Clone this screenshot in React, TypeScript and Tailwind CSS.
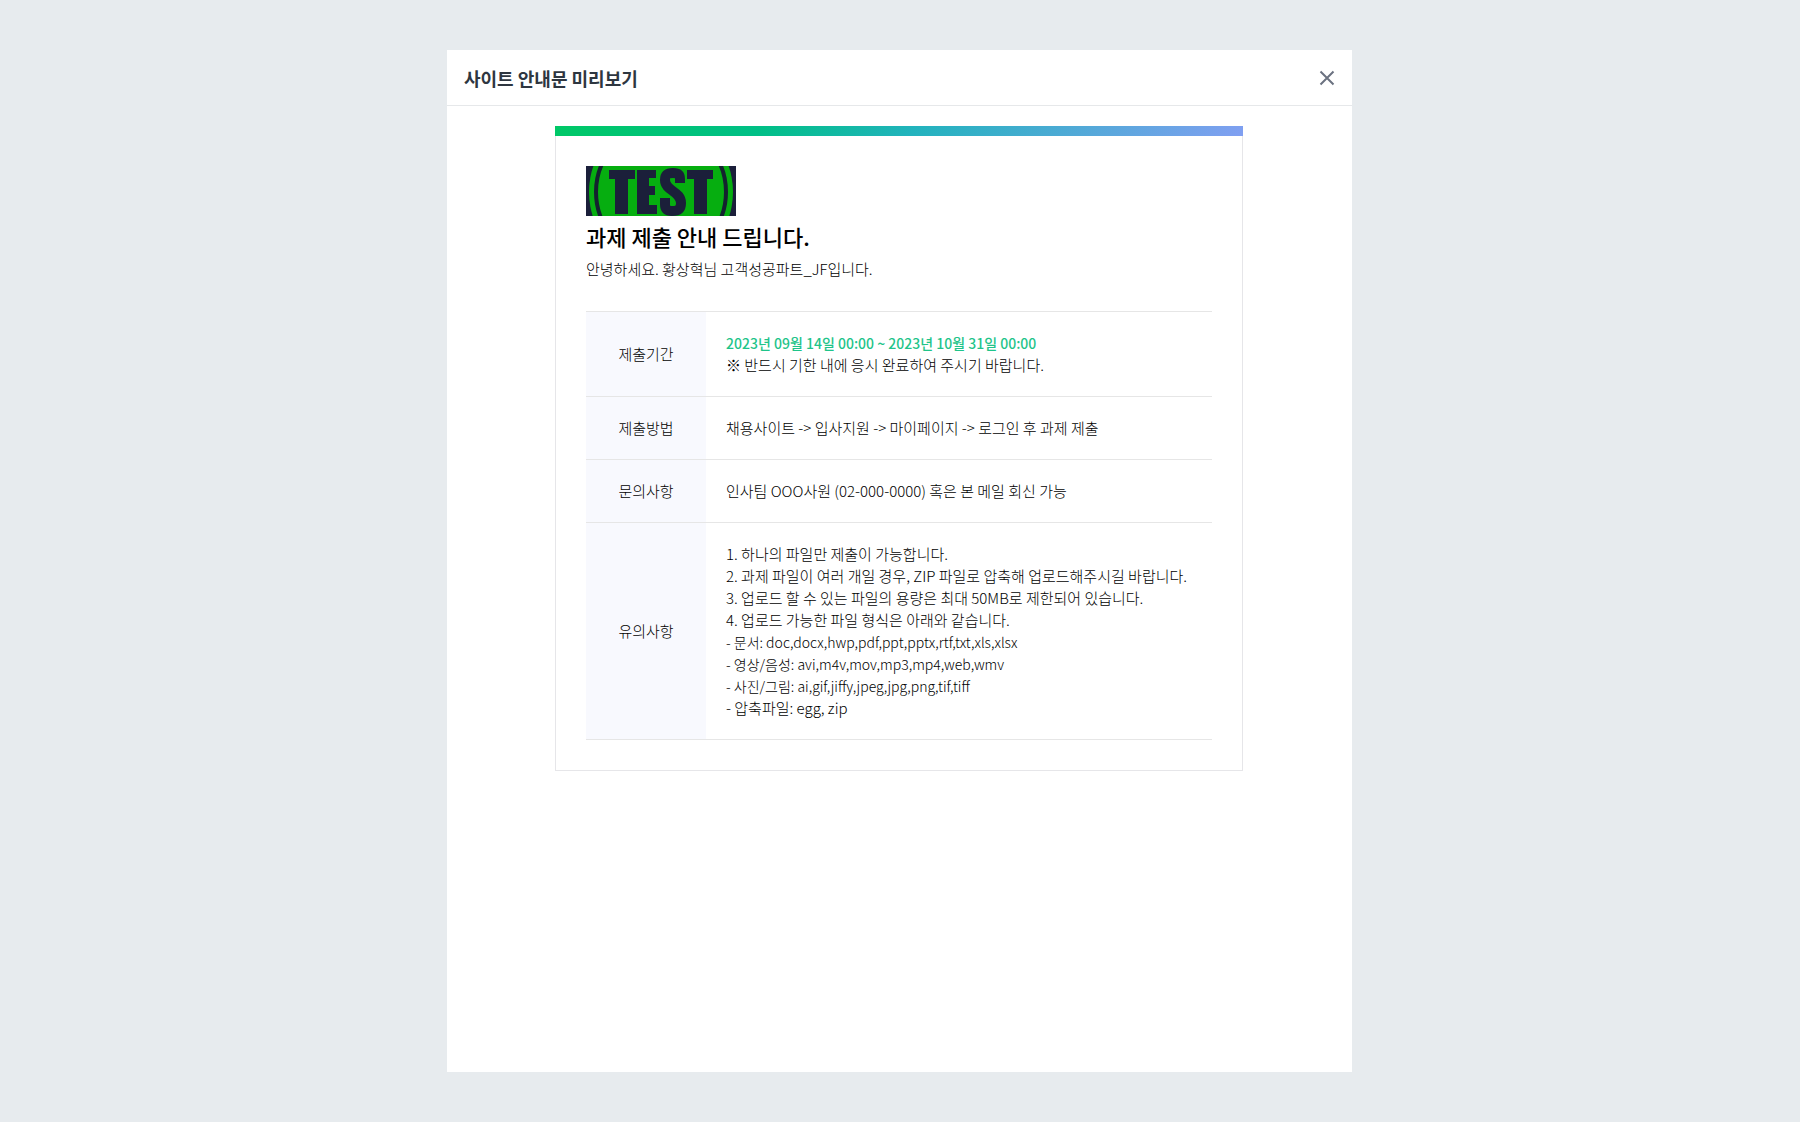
import { ReactNode } from "react";

interface GuideRow {
  label: string;
  content: ReactNode;
}

const rows: GuideRow[] = [
  {
    label: "제출기간",
    content: (
      <>
        <p className="text-sm leading-[22px] font-medium text-[#1fc48a]">
          2023년 09월 14일 00:00 ~ 2023년 10월 31일 00:00
        </p>
        <p>※ 반드시 기한 내에 응시 완료하여 주시기 바랍니다.</p>
      </>
    ),
  },
  {
    label: "제출방법",
    content: <p>채용사이트 -&gt; 입사지원 -&gt; 마이페이지 -&gt; 로그인 후 과제 제출</p>,
  },
  {
    label: "문의사항",
    content: <p>인사팀 OOO사원 (02-000-0000) 혹은 본 메일 회신 가능</p>,
  },
  {
    label: "유의사항",
    content: (
      <>
        <p>1. 하나의 파일만 제출이 가능합니다.</p>
        <p>2. 과제 파일이 여러 개일 경우, ZIP 파일로 압축해 업로드해주시길 바랍니다.</p>
        <p>3. 업로드 할 수 있는 파일의 용량은 최대 50MB로 제한되어 있습니다.</p>
        <p>4. 업로드 가능한 파일 형식은 아래와 같습니다.</p>
        <div className="text-sm leading-[22px]">
          <p>- 문서: doc,docx,hwp,pdf,ppt,pptx,rtf,txt,xls,xlsx</p>
          <p>- 영상/음성: avi,m4v,mov,mp3,mp4,web,wmv</p>
          <p>- 사진/그림: ai,gif,jiffy,jpeg,jpg,png,tif,tiff</p>
        </div>
        <p>- 압축파일: egg, zip</p>
      </>
    ),
  },
];

function Logo() {
  return (
    <svg width="150" height="50" viewBox="0 0 150 50" role="img" aria-label="TEST">
      <rect width="150" height="50" fill="#1b1f3a" />
      <ellipse cx="75" cy="26" rx="72" ry="76" fill="#06ae10" />
      <ellipse cx="75" cy="26" rx="65" ry="66" fill="none" stroke="#14222f" strokeWidth="4" />
      {/* block letters */}
      <g fill="#1b1f3a">
        <path d="M23 4H49V13H42V48H29V13H23Z" />
        <path d="M51 4H70V12H63V20H69V29H63V39H71V48H51Z" />
        <path d="M101 4H127V13H121V48H108V13H101Z" />
      </g>
      <path
        d="M94 17V13C94 8 92 7 87 7C81 7 79 9 79 14C79 25 95 25 95 37C95 43 92 45 86 45C81 45 79 43 79 38V32"
        fill="none"
        stroke="#1b1f3a"
        strokeWidth="10"
      />
    </svg>
  );
}

export default function App() {
  return (
    <div className="flex min-h-screen justify-center bg-[#e7ebee] py-[50px] pr-px font-['Noto_Sans_CJK_KR',sans-serif] text-black">
      <div role="dialog" aria-labelledby="dialog-title" className="w-full max-w-[905px] bg-white">
        {/* Header */}
        <header className="flex h-14 items-center justify-between border-b border-[#e6e8ea] px-[17px]">
          <h1 id="dialog-title" className="text-lg font-bold text-[#2e3640]">
            사이트 안내문 미리보기
          </h1>
          <button type="button" aria-label="닫기" className="flex size-4 items-center justify-center text-[#6b7280]">
            <svg viewBox="0 0 16 16" className="size-4" fill="none" stroke="currentColor" strokeWidth="2">
              <path d="M1.5 1.5 14.5 14.5M14.5 1.5 1.5 14.5" />
            </svg>
          </button>
        </header>

        {/* Mail preview */}
        <main className="px-27 pt-5">
          <div className="max-w-[688px]">
            <div className="h-2.5 bg-[linear-gradient(135deg,#00c866_0%,#00bf86_30%,#22b3bd_52%,#819ff2_100%)]" />
            <div className="border border-t-0 border-[#e6e6e9] px-[30px] py-[30px] text-[15px] leading-[22px] font-light">
              <Logo />
              <h2 className="mt-1 text-[22px] leading-8 font-medium">과제 제출 안내 드립니다.</h2>
              <p className="mt-1.5">안녕하세요. 황상혁님 고객성공파트_JF입니다.</p>

              <table className="mt-[31px] w-full border-collapse">
                <tbody>
                  {rows.map((row) => (
                    <tr key={row.label} className="border-y border-[#e6e6e6]">
                      <th scope="row" className="w-30 bg-[#f8f9fe] font-light">
                        {row.label}
                      </th>
                      <td className="px-5 py-5">{row.content}</td>
                    </tr>
                  ))}
                </tbody>
              </table>
            </div>
          </div>
        </main>
      </div>
    </div>
  );
}
